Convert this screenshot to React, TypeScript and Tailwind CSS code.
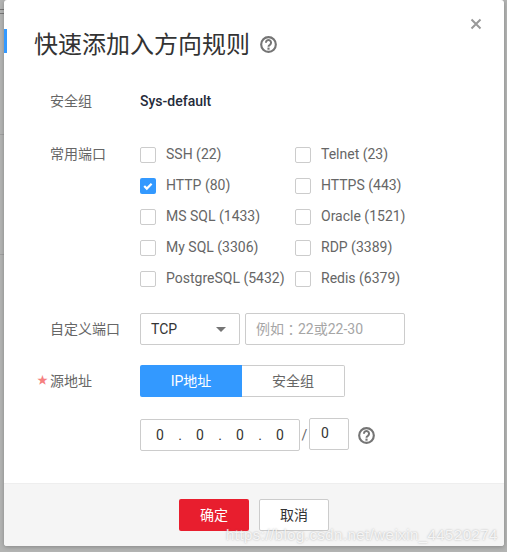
import type { ReactNode } from "react";

function Help({ className }: { className: string }) {
  return (
    <svg viewBox="0 0 16 16" className={className} fill="none">
      <circle cx="8" cy="8" r="6.9" stroke="#757575" strokeWidth="2" />
      <path d="M5.6 6.3a2.4 2.4 0 1 1 3.7 2c-.9.5-1.3.9-1.3 1.7" stroke="#757575" strokeWidth="1.9" />
      <rect x="7" y="10.9" width="2" height="2" fill="#757575" />
    </svg>
  );
}

function Check({ label, on }: { label: string; on?: boolean }) {
  return (
    <div className="flex items-center h-[31px] text-[14px] text-[#666666] whitespace-nowrap">
      {on ? (
        <span className="w-4 h-4 rounded-[2px] bg-[#3399ff] flex items-center justify-center">
          <svg viewBox="0 0 12 12" className="w-3 h-3" fill="none">
            <path d="M2.2 6l2.6 2.6 4.8-4.8" stroke="#fff" strokeWidth="2.2" />
          </svg>
        </span>
      ) : (
        <span className="w-4 h-4 rounded-[2px] border border-[#cccccc] bg-white" />
      )}
      <span className="ml-[10px]">{label}</span>
    </div>
  );
}

const left = ["SSH (22)", "HTTP (80)", "MS SQL (1433)", "My SQL (3306)", "PostgreSQL (5432)"];
const right = ["Telnet (23)", "HTTPS (443)", "Oracle (1521)", "RDP (3389)", "Redis (6379)"];

function Label({ children }: { children: ReactNode }) {
  return <div className="w-[90px] pl-[46px] box-content text-[14px] text-[#666666] shrink-0 whitespace-nowrap relative">{children}</div>;
}

export default function App() {
  return (
    <div className="w-[507px] h-[552px] bg-[#b3b4b3] overflow-hidden relative font-[Roboto,'Noto_Sans_CJK_SC',sans-serif]">
      <div className="absolute left-0 top-[9px] w-[4px] h-px bg-[#777777]" />
      <div className="absolute left-0 top-[13px] w-[4px] h-px bg-[#777777]" />
      <div className="absolute left-0 top-[134px] w-[4px] h-px bg-[#a0a0a0]" />
      <div className="absolute left-0 top-[254px] w-[4px] h-px bg-[#a0a0a0]" />
      <div className="absolute left-[4px] top-0 w-[500px] h-[546px] bg-white rounded-[3px] flex flex-col overflow-hidden shadow-[0_1px_4px_rgba(0,0,0,0.25)]">
        <div className="absolute left-0 top-[29px] w-[3px] h-[24px] bg-[#3399ff]" />
        <div className="flex-1 relative">
          <svg viewBox="0 0 12 12" className="absolute left-[466px] top-[18px] w-3 h-3" fill="none">
            <path d="M1.5 1.5l9 9M10.5 1.5l-9 9" stroke="#999999" strokeWidth="2" />
          </svg>
          <div className="flex items-center pl-[30px] pt-[28px] h-[62px]">
            <span className="text-[24px] leading-[34px] text-[#333333]">快速添加入方向规则</span>
            <Help className="w-[17px] h-[17px] ml-[10px] -mt-px" />
          </div>
          <div className="flex items-center h-[22px] mt-[28px] text-[14px]">
            <Label>安全组</Label>
            <div className="font-medium text-[#252b3a]">Sys-default</div>
          </div>
          <div className="flex mt-[27px]">
            <div className="w-[90px] pl-[46px] box-content text-[14px] text-[#666666] shrink-0 pt-[5px] whitespace-nowrap">常用端口</div>
            <div className="flex flex-col">
              {left.map((l, i) => <Check key={l} label={l} on={i === 1} />)}
            </div>
            <div className="flex flex-col absolute left-[291px]">
              {right.map((l) => <Check key={l} label={l} />)}
            </div>
          </div>
          <div className="flex items-center mt-[19px]">
            <Label>自定义端口</Label>
            <div className="w-[100px] h-8 border border-[#cccccc] rounded-[2px] flex items-center justify-between pl-[10px] pr-[13px] text-[14px] text-[#333333]">
              TCP
              <span className="w-0 h-0 border-x-[5px] border-x-transparent border-t-[5px] border-t-[#757575]" />
            </div>
            <div className="ml-[5px] w-[160px] h-8 border border-[#cccccc] rounded-[2px] flex items-center pl-[10px] text-[14px] text-[#a6a6a6]">
              例如<span className="font-['Noto_Sans_CJK_TC']">：</span>22或22-30
            </div>
          </div>
          <div className="flex items-center mt-[20px]">
            <Label>
              <span className="absolute left-[33px] top-[2px] text-[11px] text-[#f58080]">★</span>源地址
            </Label>
            <div className="w-[102px] h-8 bg-[#3399ff] rounded-l-[2px] flex items-center justify-center text-[14px] text-white">IP地址</div>
            <div className="w-[103px] h-8 border border-l-0 border-[#cccccc] rounded-r-[2px] flex items-center justify-center text-[14px] text-[#666666]">安全组</div>
          </div>
          <div className="flex items-center mt-[22px] ml-[136px]">
            <div className="w-[160px] h-8 border border-[#cccccc] rounded-[2px] flex items-center pl-[9px] text-[14px] text-[#333333]">
              {["0", ".", "0", ".", "0", ".", "0"].map((c, i) => <span key={i} className="w-5 text-center">{c}</span>)}
            </div>
            <span className="w-[9px] text-center text-[14px] text-[#666666]">/</span>
            <div className="w-10 h-8 -mt-[2px] border border-[#cccccc] rounded-[2px] flex items-center justify-center pr-[8px] pb-[2px] text-[14px] text-[#333333]">0</div>
            <Help className="w-[17px] h-[17px] ml-[9px]" />
          </div>
        </div>
        <div className="h-[63px] shrink-0 bg-[#f5f5f5] border-t border-[#eeeeee] flex justify-center gap-[10px] pt-[15px]">
          <div className="w-[70px] h-8 bg-[#e81e2e] rounded-[2px] flex items-center justify-center text-[14px] text-white">确定</div>
          <div className="w-[70px] h-8 bg-white border border-[#cccccc] rounded-[2px] flex items-center justify-center text-[14px] text-[#333333]">取消</div>
        </div>
      </div>
      <div className="absolute left-[226px] top-[524px] text-[15px] text-white/80 text-shadow-[0_0_2px_rgba(120,120,120,0.6)] font-['Liberation_Sans'] tracking-[0.45px] whitespace-nowrap">https://blog.csdn.net/weixin_44520274</div>
    </div>
  );
}
